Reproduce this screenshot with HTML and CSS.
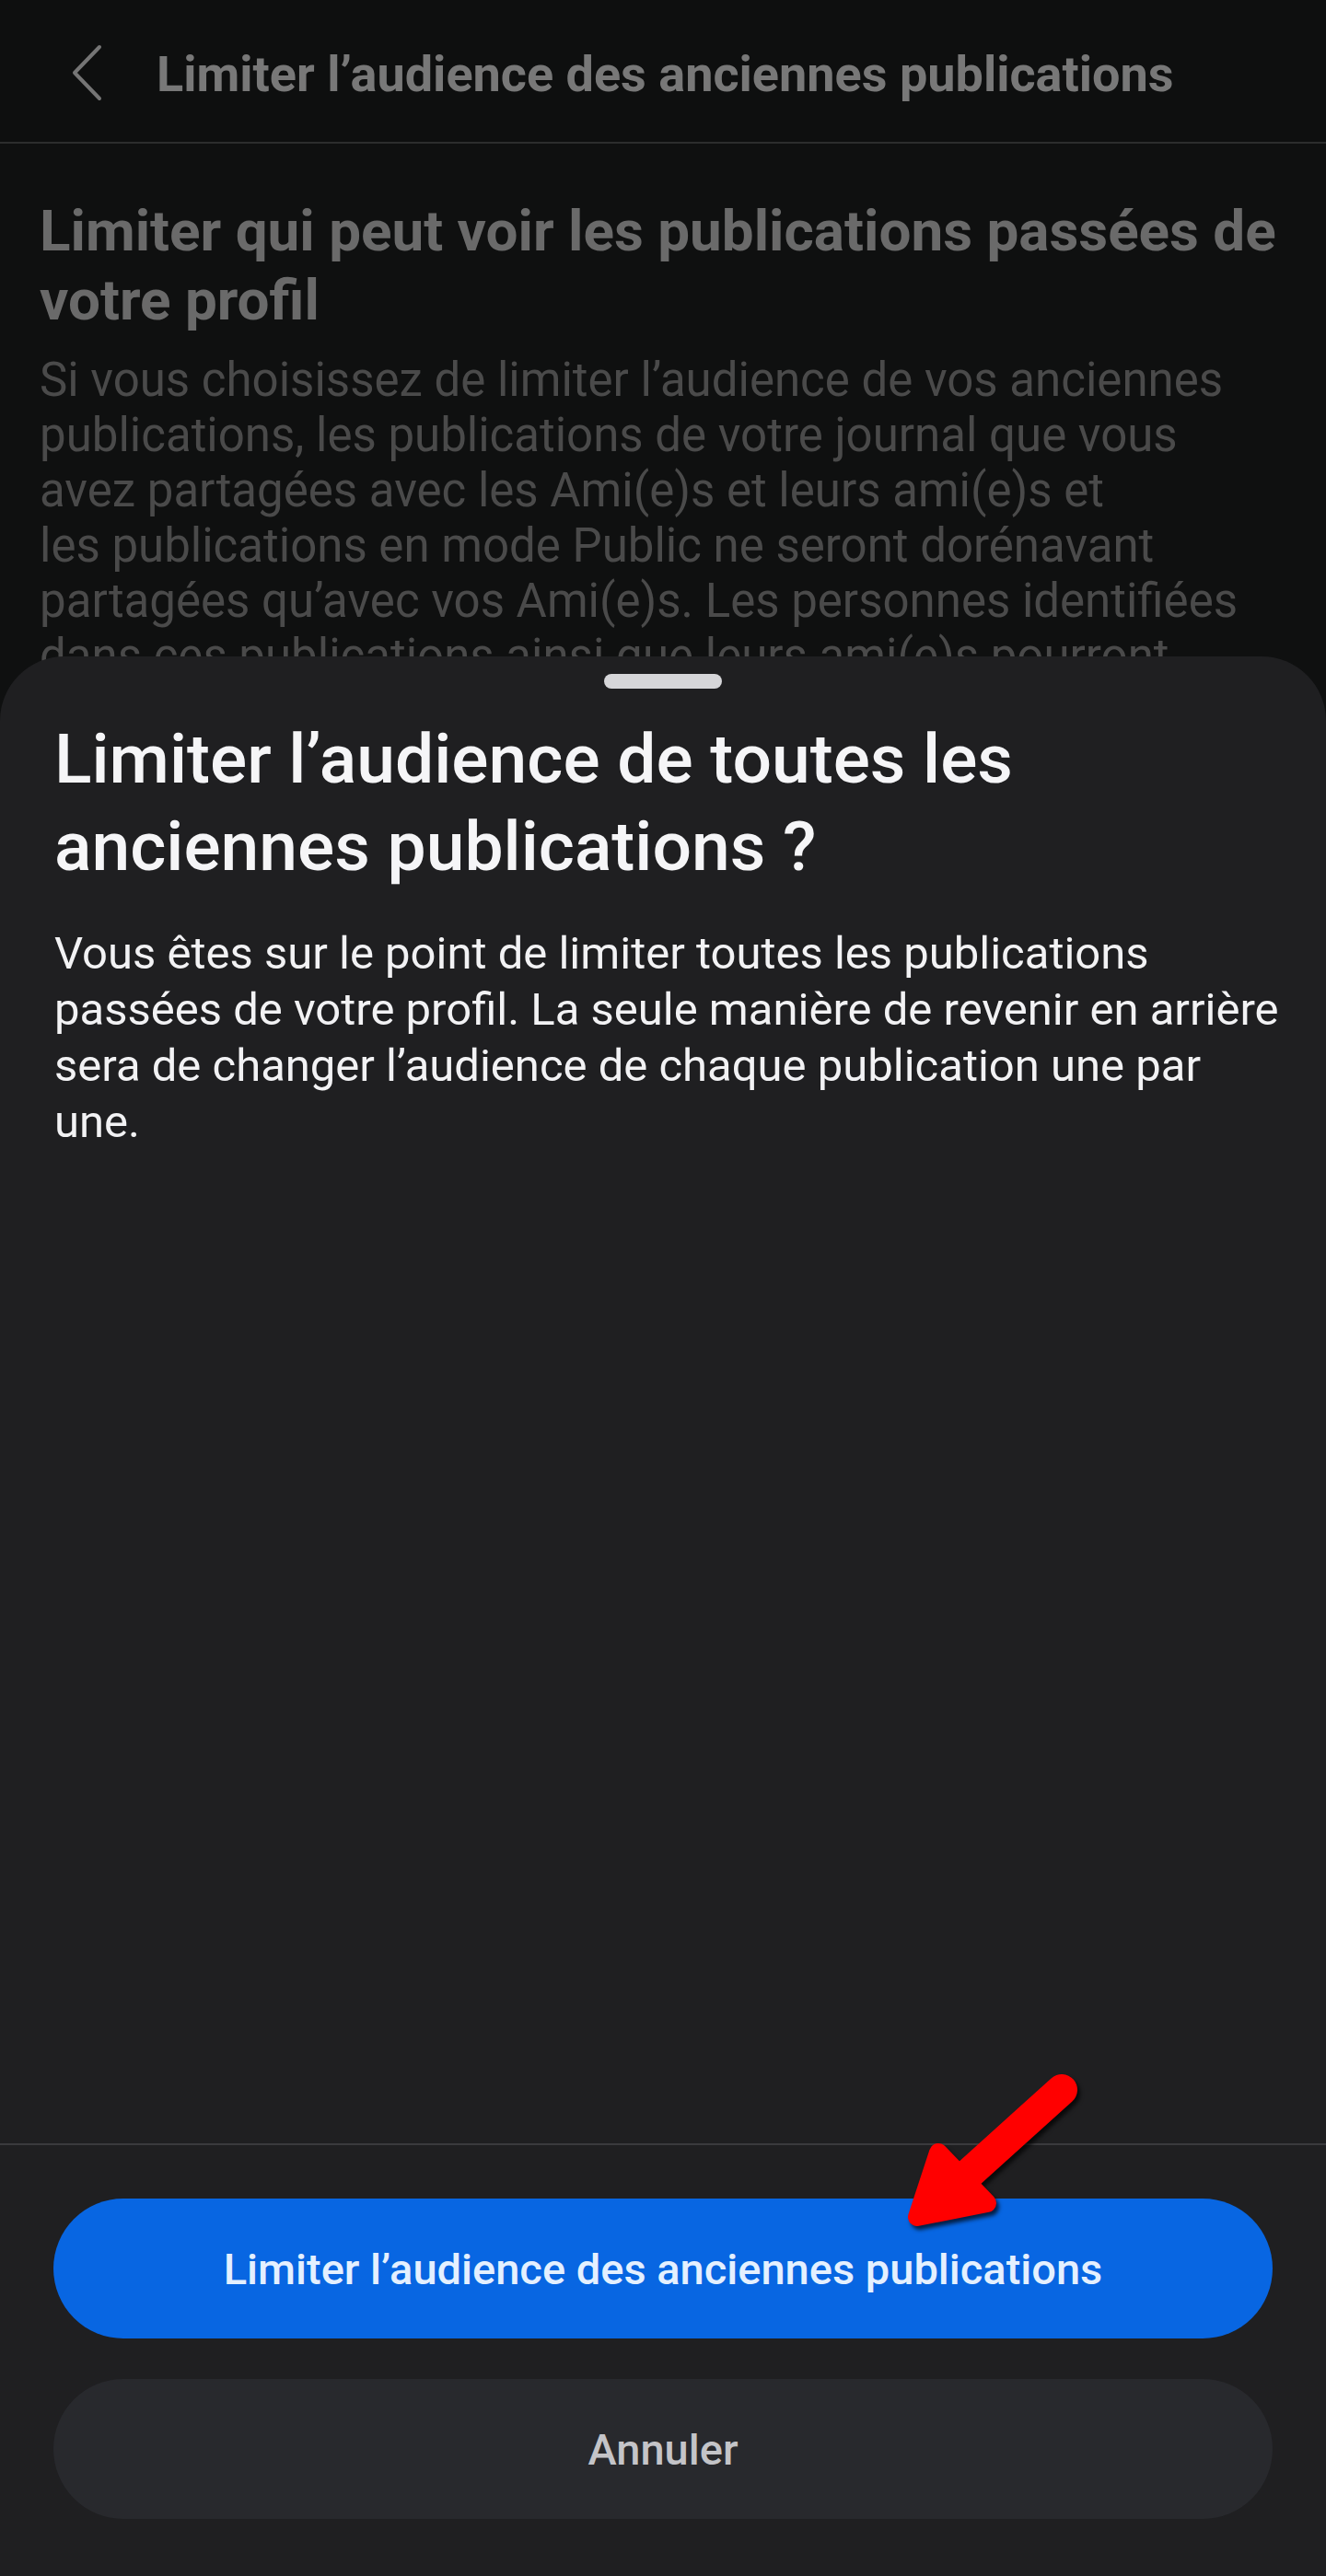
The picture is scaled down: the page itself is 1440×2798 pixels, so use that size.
FILE: index.html
```html
<!DOCTYPE html>
<html lang="fr">

<head>
    <meta charset="UTF-8">
    <meta name="viewport" content="width=device-width, initial-scale=1.0">
    <title>Limiter l’audience des anciennes publications</title>
    <link rel="stylesheet" href="styles.css">
</head>

<body>
    <div class="screen">
        <header class="top-bar">
            <svg class="back-icon" width="40" height="64" viewBox="0 0 40 64">
                <polyline points="32,4 5,32 32,60" />
            </svg>
            <h1 class="top-title">Limiter l’audience des anciennes publications</h1>
        </header>

        <main class="content">
            <h2 class="section-title">Limiter qui peut voir les publications passées de<br>votre profil</h2>
            <p class="section-text">
                Si vous choisissez de limiter l’audience de vos anciennes<br>
                publications, les publications de votre journal que vous<br>
                avez partagées avec les Ami(e)s et leurs ami(e)s et<br>
                les publications en mode Public ne seront dorénavant<br>
                partagées qu’avec vos Ami(e)s. Les personnes identifiées<br>
                dans ces publications ainsi que leurs ami(e)s pourront
            </p>
        </main>

        <!-- bottom sheet dialog -->
        <section class="sheet">
            <div class="sheet-handle"></div>
            <div class="sheet-body">
                <h3 class="sheet-title">Limiter l’audience de toutes les<br>anciennes publications ?</h3>
                <p class="sheet-text">
                    Vous êtes sur le point de limiter toutes les publications<br>
                    passées de votre profil. La seule manière de revenir en arrière<br>
                    sera de changer l’audience de chaque publication une par<br>
                    une.
                </p>
            </div>
            <div class="sheet-footer">
                <button class="btn btn-primary">Limiter l’audience des anciennes publications</button>
                <button class="btn btn-secondary">Annuler</button>
            </div>
        </section>

        <svg class="red-arrow" width="220" height="200" viewBox="960 2240 220 200">
            <line x1="1153" y1="2270" x2="1040" y2="2372" />
            <polygon points="1019,2338 1072,2393 996,2408" />
        </svg>
    </div>
</body>

</html>
```

FILE: styles.css
```css
body {
    margin: 0;
    padding: 0;
    background-color: #0f1010;
    font-family: Roboto, "Noto Sans", sans-serif;
}

.screen {
    position: relative;
    width: 1440px;
    height: 2798px;
    overflow: hidden;
    background-color: #0f1010;
}

.top-bar {
    height: 148px;
    display: flex;
    align-items: center;
    padding: 6px 0 0 76px;
    border-bottom: 2px solid #2c2d2d;
    background-color: #0e0f0f;
}

.back-icon {
    flex-shrink: 0;
    margin-top: -2px;
}

.back-icon polyline {
    fill: none;
    stroke: #757575;
    stroke-width: 4;
    stroke-linecap: round;
    stroke-linejoin: round;
}

.top-title {
    margin: 0 0 0 54px;
    font-size: 54px;
    font-weight: 700;
    color: #787878;
    white-space: nowrap;
}

.content {
    padding: 57px 43px 0;
}

.section-title {
    margin: 0;
    font-size: 62px;
    line-height: 75px;
    font-weight: 700;
    color: #6a6a6a;
    white-space: nowrap;
}

.section-text {
    margin: 20px 0 0;
    font-size: 51px;
    line-height: 60px;
    color: #4a4a4a;
    white-space: nowrap;
}

.sheet {
    position: absolute;
    top: 713px;
    left: 0;
    right: 0;
    bottom: 0;
    display: flex;
    flex-direction: column;
    background-color: #1f1f21;
    border-radius: 70px 70px 0 0;
}

.sheet-handle {
    width: 128px;
    height: 16px;
    margin: 19px auto 0;
    border-radius: 8px;
    background-color: #d6d6d9;
}

.sheet-body {
    flex-grow: 1;
    padding: 29px 59px 0;
}

.sheet-title {
    margin: 0;
    font-size: 75px;
    line-height: 95px;
    font-weight: 500;
    color: #f5f5f7;
    white-space: nowrap;
}

.sheet-text {
    margin: 38px 0 0;
    font-size: 49px;
    line-height: 61px;
    color: #f2f2f4;
    white-space: nowrap;
}

.sheet-footer {
    display: flex;
    flex-direction: column;
    gap: 44px;
    padding: 58px 58px 62px;
    border-top: 2px solid #3a3a3d;
}

.btn {
    height: 152px;
    border: none;
    border-radius: 76px;
    font-family: Roboto, "Noto Sans", sans-serif;
    font-size: 47px;
    font-weight: 500;
    cursor: pointer;
}

.btn-primary {
    background-color: #0866e2;
    color: #e4f0ff;
}

.btn-secondary {
    background-color: #28292d;
    color: #c4c4c8;
}

.red-arrow {
    position: absolute;
    left: 960px;
    top: 2240px;
    filter: drop-shadow(3px 4px 2px rgba(0, 0, 0, 0.7));
}

.red-arrow line {
    stroke: #ff0000;
    stroke-width: 34;
    stroke-linecap: round;
}

.red-arrow polygon {
    fill: #ff0000;
    stroke: #ff0000;
    stroke-width: 20;
    stroke-linejoin: round;
}
```
